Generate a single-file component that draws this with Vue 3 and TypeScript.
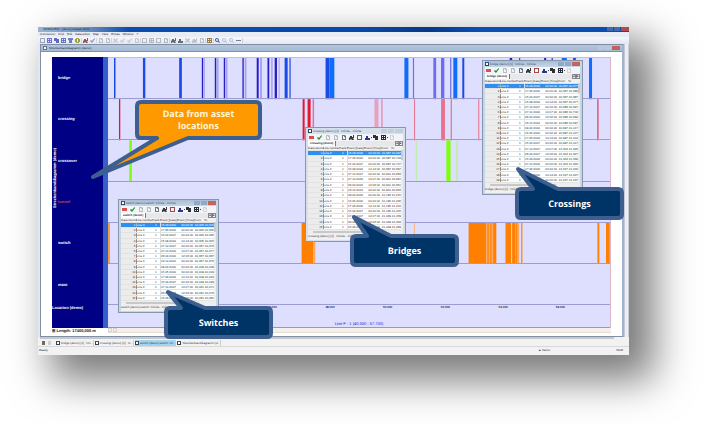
<script setup lang="ts">
interface Bar { lane: number; from: number; to: number; color: string }
interface Glyph { d: string; color: string; label: string; faint?: boolean; caret?: boolean }
interface Sheet {
  name: string; title: string; tab: string; x: number; y: number; height: number
  active: boolean; rows: string[][]
}
interface Callout {
  text: string; x: number; y: number; w: number; h: number
  tip: [number, number]; base: [number, number]; tone: string
}

const lanes = [
  { name: 'bridge' }, { name: 'crossing' }, { name: 'crossover' },
  { name: 'tunnel', alert: true }, { name: 'switch' }, { name: 'mast' },
]

const NAVY = '#2a1cc8'
const BLUE = '#1a4be8'
const BRIGHT = '#0f6cff'
const MID = '#6c6cf0'
const PALE = '#a3a3f2'
const RED = '#e01830'
const ROSE = '#e8708c'
const LIME = '#80ff10'
const ORANGE = '#ff8000'
const PEACH = '#ffa860'

const raw: [number, number, number, string][] = [
  [0, 6, 7.5, BLUE], [0, 35, 37.4, BLUE], [0, 71.3, 74, BLUE],
  [0, 94, 95.4, NAVY], [0, 96, 97, PALE], [0, 107, 108.3, NAVY], [0, 108.3, 110.8, PALE],
  [0, 116, 117.4, NAVY], [0, 118, 119.7, PALE], [0, 134.7, 136, NAVY], [0, 137, 138.7, PALE],
  [0, 149, 151, NAVY], [0, 152.8, 153.8, MID], [0, 159.8, 161.6, NAVY], [0, 163.5, 165, PALE],
  [0, 167, 169.3, NAVY], [0, 171, 172, PALE], [0, 177, 180, BLUE], [0, 181.8, 183, BLUE],
  [0, 218, 222, BLUE], [0, 222, 226.8, BRIGHT], [0, 297, 301, BRIGHT], [0, 305.5, 306.7, MID],
  [0, 326, 328.8, MID], [0, 333.7, 337, MID], [0, 342.8, 344, MID], [0, 346, 350, BRIGHT],
  [0, 355, 357, BLUE], [0, 402.5, 405, NAVY], [0, 412, 413, NAVY], [0, 437, 439, NAVY],
  [0, 444.5, 445.6, NAVY], [0, 454.7, 459.7, BRIGHT], [0, 466, 468.8, BLUE], [0, 482, 485, BRIGHT],
  [1, 11, 12.3, RED], [1, 195, 197, RED], [1, 200, 203, RED], [1, 205, 206.5, ROSE],
  [1, 267, 271, '#e8a0bc'], [1, 274, 275, ROSE], [1, 306.7, 307.7, ROSE], [1, 333.8, 337.6, ROSE],
  [1, 343.4, 344.6, ROSE], [1, 371, 372, ROSE], [1, 490.4, 491.4, RED],
  [2, 21.3, 24, LIME], [2, 308.5, 309.3, '#b4f08c'], [2, 339, 343.3, LIME], [2, 349, 350.6, '#b8f490'],
  [4, 0.3, 1.7, ORANGE], [4, 194, 205.8, ORANGE], [4, 206, 207.7, PEACH], [4, 306.5, 307.3, PEACH],
  [4, 361.3, 379, ORANGE], [4, 379, 389, PEACH], [4, 380.2, 381.4, ORANGE], [4, 383, 384.2, ORANGE],
  [4, 386, 389, ORANGE], [4, 398.3, 404, ORANGE], [4, 405, 412, PEACH], [4, 405, 408, ORANGE],
  [4, 409, 410, ORANGE], [4, 414, 415.2, ORANGE], [4, 490.4, 492.3, ORANGE], [4, 499, 502.7, ORANGE],
]
const bars: Bar[] = raw.map(([lane, from, to, color]) => ({ lane, from, to, color }))

const ticks = [
  { at: 32.6, text: '46.000' }, { at: 44.1, text: '48.000' }, { at: 55.6, text: '50.000' },
  { at: 67.1, text: '52.000' }, { at: 78.6, text: '54.000' }, { at: 90, text: '56.000' },
]

const menus = ['Connection', 'Find', 'Edit', 'Data editor', 'Map', 'View', 'Extras', 'Window', '?']

const PAGE = 'M1 0h3l1 1v4h-4zM2 1v3h2v-2h-1v-1z'
const GRID = 'M0 0h5v5h-5zM1 1v1h1v-1zM3 1v1h1v-1zM1 3v1h1v-1zM3 3v1h1v-1z'
const BOX = 'M0 0h5v5h-5zM1 1v3h3v-3z'
const CROSS = 'M0 1l1-1 1.500 1.500 1.500-1.500 1 1-1.500 1.500 1.500 1.500-1 1-1.500-1.500-1.500 1.500-1-1 1.500-1.500z'
const LENS = 'M2 0a2 2 0 0 1 1.700 3l1.300 1.300-.7.700-1.300-1.300a2 2 0 1 1-1-3.700zM2 1a1 1 0 1 0 0 2a1 1 0 0 0 0-2z'
const CHECK = 'M0 3l1-1 1 1 2.500-3 .5 1-3 4z'
const PEOPLE = 'M1 1h2v1h1v-2h1v3h-1l1 2h-2l-1-1-1 1h-1v-2l1-1z'
const COPY = 'M0 0h3v1h2v4h-3v-2h-2z'
const CAR = 'M1 1h2v2h2v2h-5v-2h1z'

const toolGroups: Glyph[][] = [
  [
    { d: BOX, color: '#8a97ad', label: 'Project' }, { d: GRID, color: '#5a50b8', label: 'Sheet' },
    { d: COPY, color: '#3c48b0', label: 'Copy' }, { d: GRID, color: '#4858b0', label: 'Cells' },
    { d: 'M0 0h5v2h-1v3h-3v-3h-1z', color: '#5060c0', label: 'Filter' },
    { d: 'M1 0h3v1h1v3h-1v1h-3v-1h-1v-3h1zM2 1v3h1v-3z', color: '#8a8a20', label: 'Globe' },
  ],
  [
    { d: PEOPLE, color: '#8a3030', label: 'Find' }, { d: CHECK, color: '#8080b0', label: 'Apply' },
  ],
  [
    { d: PAGE, color: '#8a8f98', label: 'New', faint: true }, { d: PAGE, color: '#8a8f98', label: 'Open', faint: true },
  ],
  [
    { d: CROSS, color: '#a0a4ac', label: 'Cut', faint: true }, { d: CHECK, color: '#a0a4ac', label: 'Undo', faint: true },
    { d: CHECK, color: '#a0a4ac', label: 'Redo', faint: true }, { d: PAGE, color: '#a0a4ac', label: 'Paste', faint: true },
  ],
  [
    { d: BOX, color: '#80858e', label: 'Frame', faint: true }, { d: GRID, color: '#80858e', label: 'Table', faint: true },
    { d: BOX, color: '#80858e', label: 'Panel', faint: true }, { d: PAGE, color: '#80858e', label: 'Report', faint: true },
  ],
  [
    { d: PEOPLE, color: '#404858', label: 'Users' }, { d: CAR, color: '#405060', label: 'Vehicle' },
    { d: CROSS, color: '#90949c', label: 'Remove', faint: true }, { d: PEOPLE, color: '#90949c', label: 'Group', faint: true },
    { d: PAGE, color: '#90949c', label: 'Note', faint: true },
  ],
  [{ d: GRID, color: '#806020', label: 'Legend' }],
  [
    { d: LENS, color: '#2040a0', label: 'Zoom' }, { d: LENS, color: '#80a0c0', label: 'Zoom in', faint: true },
    { d: LENS, color: '#80a0c0', label: 'Zoom out', faint: true }, { d: 'M0 2h5v1h-5z', color: '#606870', label: 'Measure' },
  ],
]

const sheetTools: Glyph[] = [
  { d: 'M0 1h5v3h-5z', color: '#d85048', label: 'SQL' },
  { d: CHECK, color: '#189028', label: 'Commit' },
  { d: PAGE, color: '#808890', label: 'Insert', faint: true },
  { d: PAGE, color: '#808890', label: 'Delete', faint: true },
  { d: PAGE, color: '#707880', label: 'Form' },
  { d: PEOPLE, color: '#303c38', label: 'Search' },
  { d: BOX, color: '#a04848', label: 'Stop' },
  { d: CAR, color: '#283890', label: 'Locate', caret: true },
  { d: COPY, color: '#303038', label: 'Duplicate' },
  { d: GRID, color: '#282c38', label: 'Print', caret: true },
  { d: PAGE, color: '#b0b4bc', label: 'More', faint: true },
]

const heads = ['Data record', 'Line number', 'Track', 'Event [Date]', 'Event [Time]', 'From', 'To']
const dates = [
  '15.03.2000', '17.06.2000', '15.04.2007', '15.09.2000', '07.10.2007', '07.10.2000', '26.04.2000',
  '16.10.2010', '09.04.2000', '15.05.2000', '17.06.2000', '15.04.2007', '07.10.2007', '26.04.2007',
  '15.06.2000', '07.10.2000', '17.06.2000', '15.04.2000', '16.10.2010',
]
const times = ['00:00:00', '00:00:00', '00:00:00', '10:14:00', '00:00:00', '14:07:00', '12:06:00']

function makeRows(count: number, start: number, step: number): string[][] {
  return Array.from({ length: count }, (_, i) => {
    const from = start + Math.floor(i / 4) * step
    return [
      String(i + 1), 'Line F', '1', dates[i], times[i % times.length],
      from.toFixed(3).replace('.', ','), (from + 0.01 + (i % 3) * 0.005).toFixed(3).replace('.', ','),
    ]
  })
}

const sheets: Sheet[] = [
  { name: 'bridge', title: 'bridge (demo) [1] : Infinite - Infinite', tab: 'bridge (demo)', x: 482, y: 60, height: 135, active: true, rows: makeRows(19, 40.367, 0.315) },
  { name: 'crossing', title: 'crossing (demo) [1] : Infinite - Infinite', tab: 'crossing (demo)', x: 305, y: 127, height: 115, active: false, rows: makeRows(15, 40.687, 0.254) },
  { name: 'switch', title: 'switch (demo).switch: Infinite - Infinite', tab: 'switch (demo)', x: 118, y: 199, height: 114, active: true, rows: makeRows(15, 40.305, 0.052) },
]

const callouts: Callout[] = [
  { text: 'Data from asset locations', x: 135, y: 100, w: 127, h: 40, tip: [-42, 77], base: [22, 53], tone: 'amber' },
  { text: 'Crossings', x: 515, y: 187, w: 109, h: 33, tip: [3, -18], base: [18, 43], tone: 'navy' },
  { text: 'Bridges', x: 350, y: 234, w: 109, h: 33, tip: [4, -17], base: [17, 41], tone: 'navy' },
  { text: 'Switches', x: 164, y: 306, w: 109, h: 33, tip: [4, -14], base: [17, 41], tone: 'navy' },
]

/** Rounded box whose edge nearest the tip opens into a pointer. */
function bubble(c: Callout): string {
  const i = 2
  const r = 4
  const R = c.w - i
  const B = c.h - i
  const [a, b] = c.base
  const [tx, ty] = c.tip
  const top = ty < 0 ? `H${a}L${tx} ${ty}L${b} ${i}` : ''
  const bottom = ty > 0 ? `H${b}L${tx} ${ty}L${a} ${B}` : ''
  return `M${i + r} ${i}${top}H${R - r}Q${R} ${i} ${R} ${i + r}V${B - r}Q${R} ${B} ${R - r} ${B}${bottom}H${i + r}Q${i} ${B} ${i} ${B - r}V${i + r}Q${i} ${i} ${i + r} ${i}Z`
}

const openDocs = [
  { text: 'bridge (demo) [1] : Infi...' }, { text: 'crossing (demo) [1] : In...' },
  { text: 'switch (demo).switch: Inf...', current: true }, { text: 'Streckenbanddiagramm (d...' },
]
</script>

<template>
  <main class="stage">
    <section class="app">
      <header class="titlebar">
        <span>INFRAVIEW - [demo] release 2010</span>
        <div class="caption"><button aria-label="Minimize"></button><button aria-label="Maximize"></button><button class="close" aria-label="Close"></button></div>
      </header>
      <nav class="menu"><a v-for="m in menus" :key="m" href="#">{{ m }}</a></nav>
      <div class="toolbar">
        <div v-for="(g, n) in toolGroups" :key="n" class="group">
          <button v-for="t in g" :key="t.label" :aria-label="t.label" :class="{ faint: t.faint }">
            <svg viewBox="0 0 5 5"><path :d="t.d" :fill="t.color" fill-rule="evenodd" /></svg>
          </button>
        </div>
      </div>

      <div class="workspace">
        <section class="document">
          <header class="doc-title">
            <i class="win-icon"></i><span>Streckenbanddiagramm (demo)</span>
            <div class="caption"><button aria-label="Minimize"></button><button aria-label="Restore"></button><button class="close" aria-label="Close"></button></div>
          </header>
          <div class="doc-body">
            <div class="diagram">
              <aside class="names">
                <span class="vertical">Streckenbanddiagramm (demo)</span>
                <div v-for="l in lanes" :key="l.name" class="name" :class="{ alert: l.alert }">{{ l.name }}</div>
                <div class="location">Location (demo)</div>
              </aside>
              <div class="plot">
                <div class="lanes">
                  <svg class="bars" viewBox="0 0 503 6" preserveAspectRatio="none">
                    <rect v-for="(b, n) in bars" :key="n" :x="b.from" :y="b.lane" :width="b.to - b.from" height="1" :fill="b.color" />
                  </svg>
                  <div v-for="l in lanes" :key="l.name" class="lane"></div>
                </div>
                <div class="axis">
                  <span v-for="t in ticks" :key="t.text" class="tick" :style="{ left: t.at + '%' }">{{ t.text }}</span>
                  <span class="caption-line">Line F - 1 (40.300 - 57.700)</span>
                </div>
              </div>
            </div>
            <footer class="length"><span>⊞ Length: 17400,000 m</span><div class="track"><i></i><i></i></div></footer>
          </div>
        </section>
        <div class="vscroll"></div>
      </div>

      <div class="hscroll"><i></i></div>
      <nav class="doc-tabs">
        <i class="pin"></i><i class="pin pale"></i>
        <a v-for="d in openDocs" :key="d.text" href="#" :class="{ current: d.current }"><i class="win-icon"></i><span>{{ d.text }}</span></a>
      </nav>
      <footer class="status"><span>Ready.</span><span class="demo">▲ Demo</span><span>NUM</span></footer>
    </section>

    <section v-for="s in sheets" :key="s.name" class="sheet" :class="{ idle: !s.active }" :style="{ left: s.x + 'px', top: s.y + 'px', height: s.height + 'px' }">
      <header class="sheet-title">
        <i class="win-icon"></i><span>{{ s.title }}</span>
        <div class="caption"><button aria-label="Minimize"></button><button aria-label="Maximize"></button><button class="close" aria-label="Close"></button></div>
      </header>
      <div class="sheet-tools">
        <button v-for="t in sheetTools" :key="t.label" :aria-label="t.label" :class="{ faint: t.faint, caret: t.caret }">
          <svg viewBox="0 0 5 5"><path :d="t.d" :fill="t.color" fill-rule="evenodd" /></svg>
        </button>
      </div>
      <div class="sheet-tab"><span>{{ s.tab }}</span><div><button aria-label="Previous">◂</button><button aria-label="Next">▸</button></div></div>
      <div class="grid-area">
        <table>
          <colgroup><col class="w15"><col class="w16"><col class="w8"><col class="w17"><col class="w17"><col class="w10"><col class="w10"></colgroup>
          <thead><tr><th v-for="h in heads" :key="h">{{ h }}</th></tr></thead>
          <tbody>
            <tr v-for="(r, n) in s.rows" :key="n" :class="{ picked: n === 0 }"><td v-for="(c, k) in r" :key="k">{{ c }}</td></tr>
          </tbody>
        </table>
        <div class="grid-scroll"><i></i></div>
      </div>
      <div class="grid-hscroll"><i></i></div>
      <footer class="sheet-foot">{{ s.title }}</footer>
    </section>

    <div v-for="c in callouts" :key="c.text" class="callout" :class="c.tone" :style="{ left: c.x + 'px', top: c.y + 'px', width: c.w + 'px', height: c.h + 'px' }">
      <svg :viewBox="`0 0 ${c.w} ${c.h}`"><path :d="bubble(c)" /></svg>
      <p>{{ c.text }}</p>
    </div>
  </main>
</template>

<style>
body { background: #fff; }
</style>

<style scoped>
* { box-sizing: border-box; }
.stage { position: relative; padding: 27px 76px 70px 38px; font: 4px/5px "Liberation Sans", Arial, sans-serif; color: #223; overflow: hidden; text-rendering: geometricPrecision; }
button { border: 0; padding: 0; background: none; font: inherit; color: inherit; display: block; }
a { color: inherit; text-decoration: none; }
span { white-space: nowrap; }

.app { background: #f2f2f2; box-shadow: 19px 19px 38px 6px rgba(0, 0, 0, .52); }
.titlebar { display: flex; height: 5px; background: linear-gradient(90deg, #9cb4d0 0, #6a8fc0 50px, #0c4cac 90px, #0a48a8 55%, #083888 66%, #0c50b4 75%, #0a4cb0); padding-left: 5px; font-size: 3px; color: #14284c; }
.titlebar span { flex: 1; }
.caption { display: flex; gap: 1px; margin-left: auto; }
.caption button { width: 6px; height: 4px; background: #8fa9cb; }
.caption .close { width: 8px; background: #c45a50; }
.titlebar .caption button { background: #3f6cae; }
.titlebar .caption .close { background: #b04a50; }
.menu { display: flex; gap: 3px; height: 5px; padding-left: 2px; background: #e8ecf5; font-size: 3px; }
.toolbar { display: flex; gap: 1px; height: 7px; padding: 1px 2px; background: linear-gradient(#f6f7fb, #e3e7f0); }
.group { display: flex; gap: 2px; padding-right: 1px; border-right: 1px solid #cfd3dc; }
.toolbar button, .sheet-tools button { width: 5px; height: 5px; }
.toolbar svg, .sheet-tools svg { display: block; width: 5px; height: 5px; }
.toolbar button { opacity: .8; }
.toolbar .faint, .faint { opacity: .5; }

.workspace { display: flex; background: #e4e7ec; }
.document { flex: 1; margin-left: 2px; border: 1px solid #7f8fa6; border-right: 2px solid #9fb3cc; background: #fff; }
.doc-title { display: flex; align-items: center; gap: 2px; height: 7px; padding: 0 2px; background: linear-gradient(#b4c6dc, #a4bad4); border-bottom: 1px solid #7f93ae; font-size: 3px; }
.doc-title .caption button { background: #b9c8dc; }
.doc-title .caption .close { background: #c4625a; }
.win-icon { flex: none; width: 4px; height: 4px; border: 1px solid #345; border-top-color: #2a58a8; background: #fff; }
.doc-title .win-icon { border-color: #5b7088; }
.doc-body { padding: 5px 11px 3px; }
.diagram { display: flex; }
.names { position: relative; width: 56px; background: #000084; border-right: 5px solid #3560cc; color: #fff; font-weight: bold; display: grid; grid-template-rows: repeat(6, 1fr) 23px; }
.name { padding-left: 6px; display: flex; align-items: center; }
.name.alert { color: #d04848; }
.location { line-height: 5px; }
.vertical { position: absolute; left: 0; bottom: 120px; writing-mode: vertical-rl; transform: rotate(180deg); }
.plot { flex: 1; background: #dedeff; border-right: 1px solid #d8b8c8; border-top: 1px solid #d8b8c8; }
.lanes { position: relative; height: 247px; display: grid; grid-template-rows: repeat(6, 1fr); }
.bars { position: absolute; inset: 0; width: 100%; height: 100%; }
.lane { position: relative; border-bottom: 1px solid #9c9cd0; }
.axis { position: relative; height: 23px; padding-bottom: 1px; border-bottom: 1px solid #9a98b8; display: flex; justify-content: center; align-items: flex-end; }
.tick { position: absolute; top: 0; margin-left: -4px; font: bold 3px/4px "Liberation Sans", Arial, sans-serif; color: #223; }
.caption-line { color: #2020d8; }
.length { display: flex; height: 5px; font-weight: bold; color: #112; }
.length span { width: 56px; }
.track { flex: 1; display: flex; gap: 1px; background: #f5f0ea; border-bottom: 1px solid #e4ddd4; }
.track i { width: 4px; height: 4px; border: 1px solid #d8d4d0; }
.vscroll { width: 5px; border-left: 1px solid #c4cad4; border-right: 1px solid #c9ced6; background: #eceef2; }

.hscroll { height: 3px; padding: 0 15px 1px 2px; }
.hscroll i { display: block; height: 2px; background: #c8c8c8; }
.doc-tabs { display: flex; align-items: center; gap: 1px; height: 7px; padding-left: 4px; border-bottom: 1px solid #d8d8d8; }
.pin { width: 3px; height: 4px; margin-right: 2px; background: #69705c; }
.pin.pale { background: #d0d0d0; margin-right: 4px; }
.doc-tabs a { display: flex; align-items: center; gap: 1px; min-width: 37px; height: 6px; font: 3px/5px "Liberation Sans", Arial, sans-serif; border-right: 1px solid #ccc; color: #334; }
.doc-tabs .current { background: #a4d4ee; }
.status { display: flex; gap: 66px; height: 8px; padding: 1px 6px 0 1px; font-size: 3px; }
.status .demo { margin-left: auto; }

.sheet { position: absolute; width: 101px; display: flex; flex-direction: column; padding: 0 2px 1px; background: #c6d6e8; border: 1px solid #8796a8; font-size: 3px; line-height: 4px; }
.sheet-title { display: flex; align-items: center; gap: 1px; height: 6px; flex: none; background: linear-gradient(#a9bdd3, #c6d6e8); color: #345; }
.sheet-title .caption .close { background: #cc6257; }
.idle .sheet-title .caption button { background: #c3cedb; }
.idle, .idle .sheet-title { background: #d5e0ec; }
.sheet-tools { display: flex; gap: 3px; height: 7px; flex: none; padding: 1px; background: #f3f4f7; }
.caret { position: relative; }
.caret::after { content: ""; position: absolute; left: 6px; top: 2px; width: 1px; height: 1px; background: #444; }
.sheet-tab { display: flex; justify-content: space-between; height: 5px; flex: none; background: #e6e8ec; font-weight: bold; }
.sheet-tab span { padding: 0 2px; background: #fff; border-right: 1px solid #777; }
.sheet-tab div { display: flex; }
.sheet-tab button { width: 4px; height: 5px; border: 1px solid #888; background: #eee; line-height: 3px; }
.grid-area { flex: 1; display: flex; min-height: 0; background: #fff; }
table { flex: none; width: 93px; height: 100%; table-layout: fixed; border-collapse: collapse; color: #333; }
.w15 { width: 15px; } .w16 { width: 16px; } .w8 { width: 8px; } .w17 { width: 17px; } .w10 { width: 10px; }
th, td { padding: 0; white-space: nowrap; line-height: 4px; font-weight: normal; text-align: right; border-bottom: 1px solid #e2e2e2; }
th { background: #f1f1f1; text-align: left; }
td:nth-child(4), td:nth-child(5) { padding-right: 1px; }
td:first-child { background: #ececec; border-right: 1px solid #999; }
td:nth-child(2) { text-align: left; }
td:nth-child(3) { text-align: center; border-right: 1px solid #ddd; }
.picked td, .picked td:first-child { background: #2f8fee; color: #fff; }
.grid-scroll { flex: 1; background: #eee; padding-top: 4px; }
.grid-scroll i { display: block; height: 10px; border: 1px solid #ccc; }
.grid-hscroll { height: 4px; flex: none; padding: 1px 5px; background: #ededed; }
.grid-hscroll i { display: block; width: 66px; height: 2px; background: #c8c8c8; }
.sheet-foot { height: 6px; flex: none; background: #f0f0f0; color: #334; }

.callout { position: absolute; display: grid; place-items: center; padding: 0 20px; }
.callout svg { position: absolute; left: 0; top: 0; width: 100%; height: 100%; overflow: visible; }
.callout path { stroke: #3c5f90; stroke-width: 4px; stroke-linejoin: round; }
.amber path { fill: #ff9900; }
.navy path { fill: #003366; }
.callout p { position: relative; margin: 0; font: bold 9px/12px "Open Sans", "Noto Sans", sans-serif; text-align: center; color: #fff; }
.amber p { color: #fff6d8; }
</style>
